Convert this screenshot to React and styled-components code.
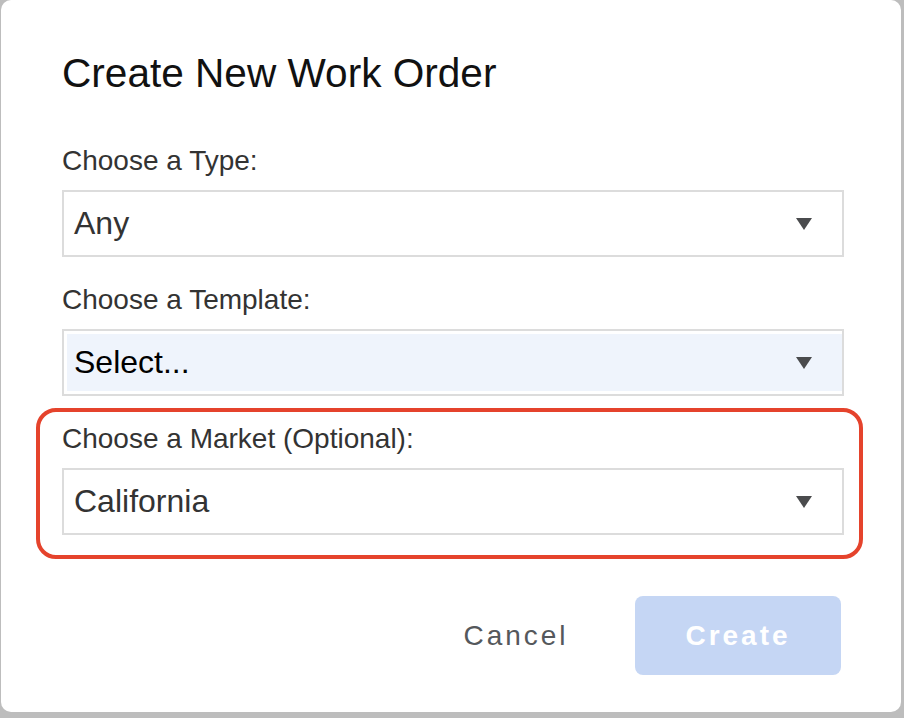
import React from "react";
import styled, { createGlobalStyle } from "styled-components";

const GlobalStyle = createGlobalStyle`
  html, body {
    margin: 0;
    padding: 0;
    background: #bdbdbd;
  }
  body {
    font-family: "Liberation Sans", Arial, sans-serif;
    width: 904px;
    height: 718px;
    overflow: hidden;
  }
`;

const Card = styled.div`
  box-sizing: border-box;
  width: 900px;
  height: 712px;
  margin-left: 1px;
  background: #fff;
  border-radius: 10px;
  padding: 50px 57px 0 61px;
  display: flex;
  flex-direction: column;
`;

const Title = styled.h1`
  margin: 0 0 48px;
  font-size: 40.6px;
  font-weight: 400;
  line-height: 46px;
  color: #111;
`;

const Fields = styled.div`
  display: flex;
  flex-direction: column;
  gap: 26px;
`;

const Field = styled.div`
  display: flex;
  flex-direction: column;
`;

const Highlight = styled.div`
  margin: -14px -19px -24px -26px;
  padding: 10px 15px 20px 22px;
  border: 4px solid #e5432c;
  border-radius: 20px;
`;

const Label = styled.label`
  font-size: 28px;
  line-height: 34px;
  color: #333;
  margin-bottom: 12px;
`;

const Select = styled.div`
  box-sizing: border-box;
  height: 67px;
  border: 2px solid #dcdcdc;
  background: ${p => (p.$filled ? "#eff4fc" : "#fff")};
  box-shadow: ${p => (p.$filled ? "inset 3px 3px 0 #fff, inset 0 -3px 0 #fff" : "none")};
  display: flex;
  align-items: center;
  justify-content: space-between;
  padding: 0 30px 0 10px;
`;

const Value = styled.span`
  font-size: 32px;
  color: ${p => (p.$dark ? "#000" : "#333")};
`;

const Arrow = () => (
  <svg width="16" height="12" viewBox="0 0 16 12">
    <polygon points="0,0 16,0 8,12" fill="#4a4b4d" />
  </svg>
);

const Actions = styled.div`
  margin: 61px 3px 0 0;
  display: flex;
  justify-content: flex-end;
  gap: 16px;
`;

const Button = styled.button`
  width: 206px;
  height: 79px;
  border: none;
  border-radius: 8px;
  font-family: "Liberation Sans", Arial, sans-serif;
  font-size: 28px;
  letter-spacing: 3px;
  font-weight: ${p => (p.$primary ? 700 : 400)};
  color: ${p => (p.$primary ? "#fff" : "#55585c")};
  background: ${p => (p.$primary ? "#c5d6f4" : "transparent")};
  padding: 0;
  cursor: pointer;
`;

const SelectField = ({ label, value, filled, dark }) => (
  <Field>
    <Label>{label}</Label>
    <Select $filled={filled}>
      <Value $dark={dark}>{value}</Value>
      <Arrow />
    </Select>
  </Field>
);

export default function App() {
  return (
    <>
      <GlobalStyle />
      <Card>
        <Title>Create New Work Order</Title>
        <Fields>
          <SelectField label="Choose a Type:" value="Any" />
          <SelectField label="Choose a Template:" value="Select..." filled dark />
          <Highlight>
            <SelectField label="Choose a Market (Optional):" value="California" />
          </Highlight>
        </Fields>
        <Actions>
          <Button>Cancel</Button>
          <Button $primary>Create</Button>
        </Actions>
      </Card>
    </>
  );
}
